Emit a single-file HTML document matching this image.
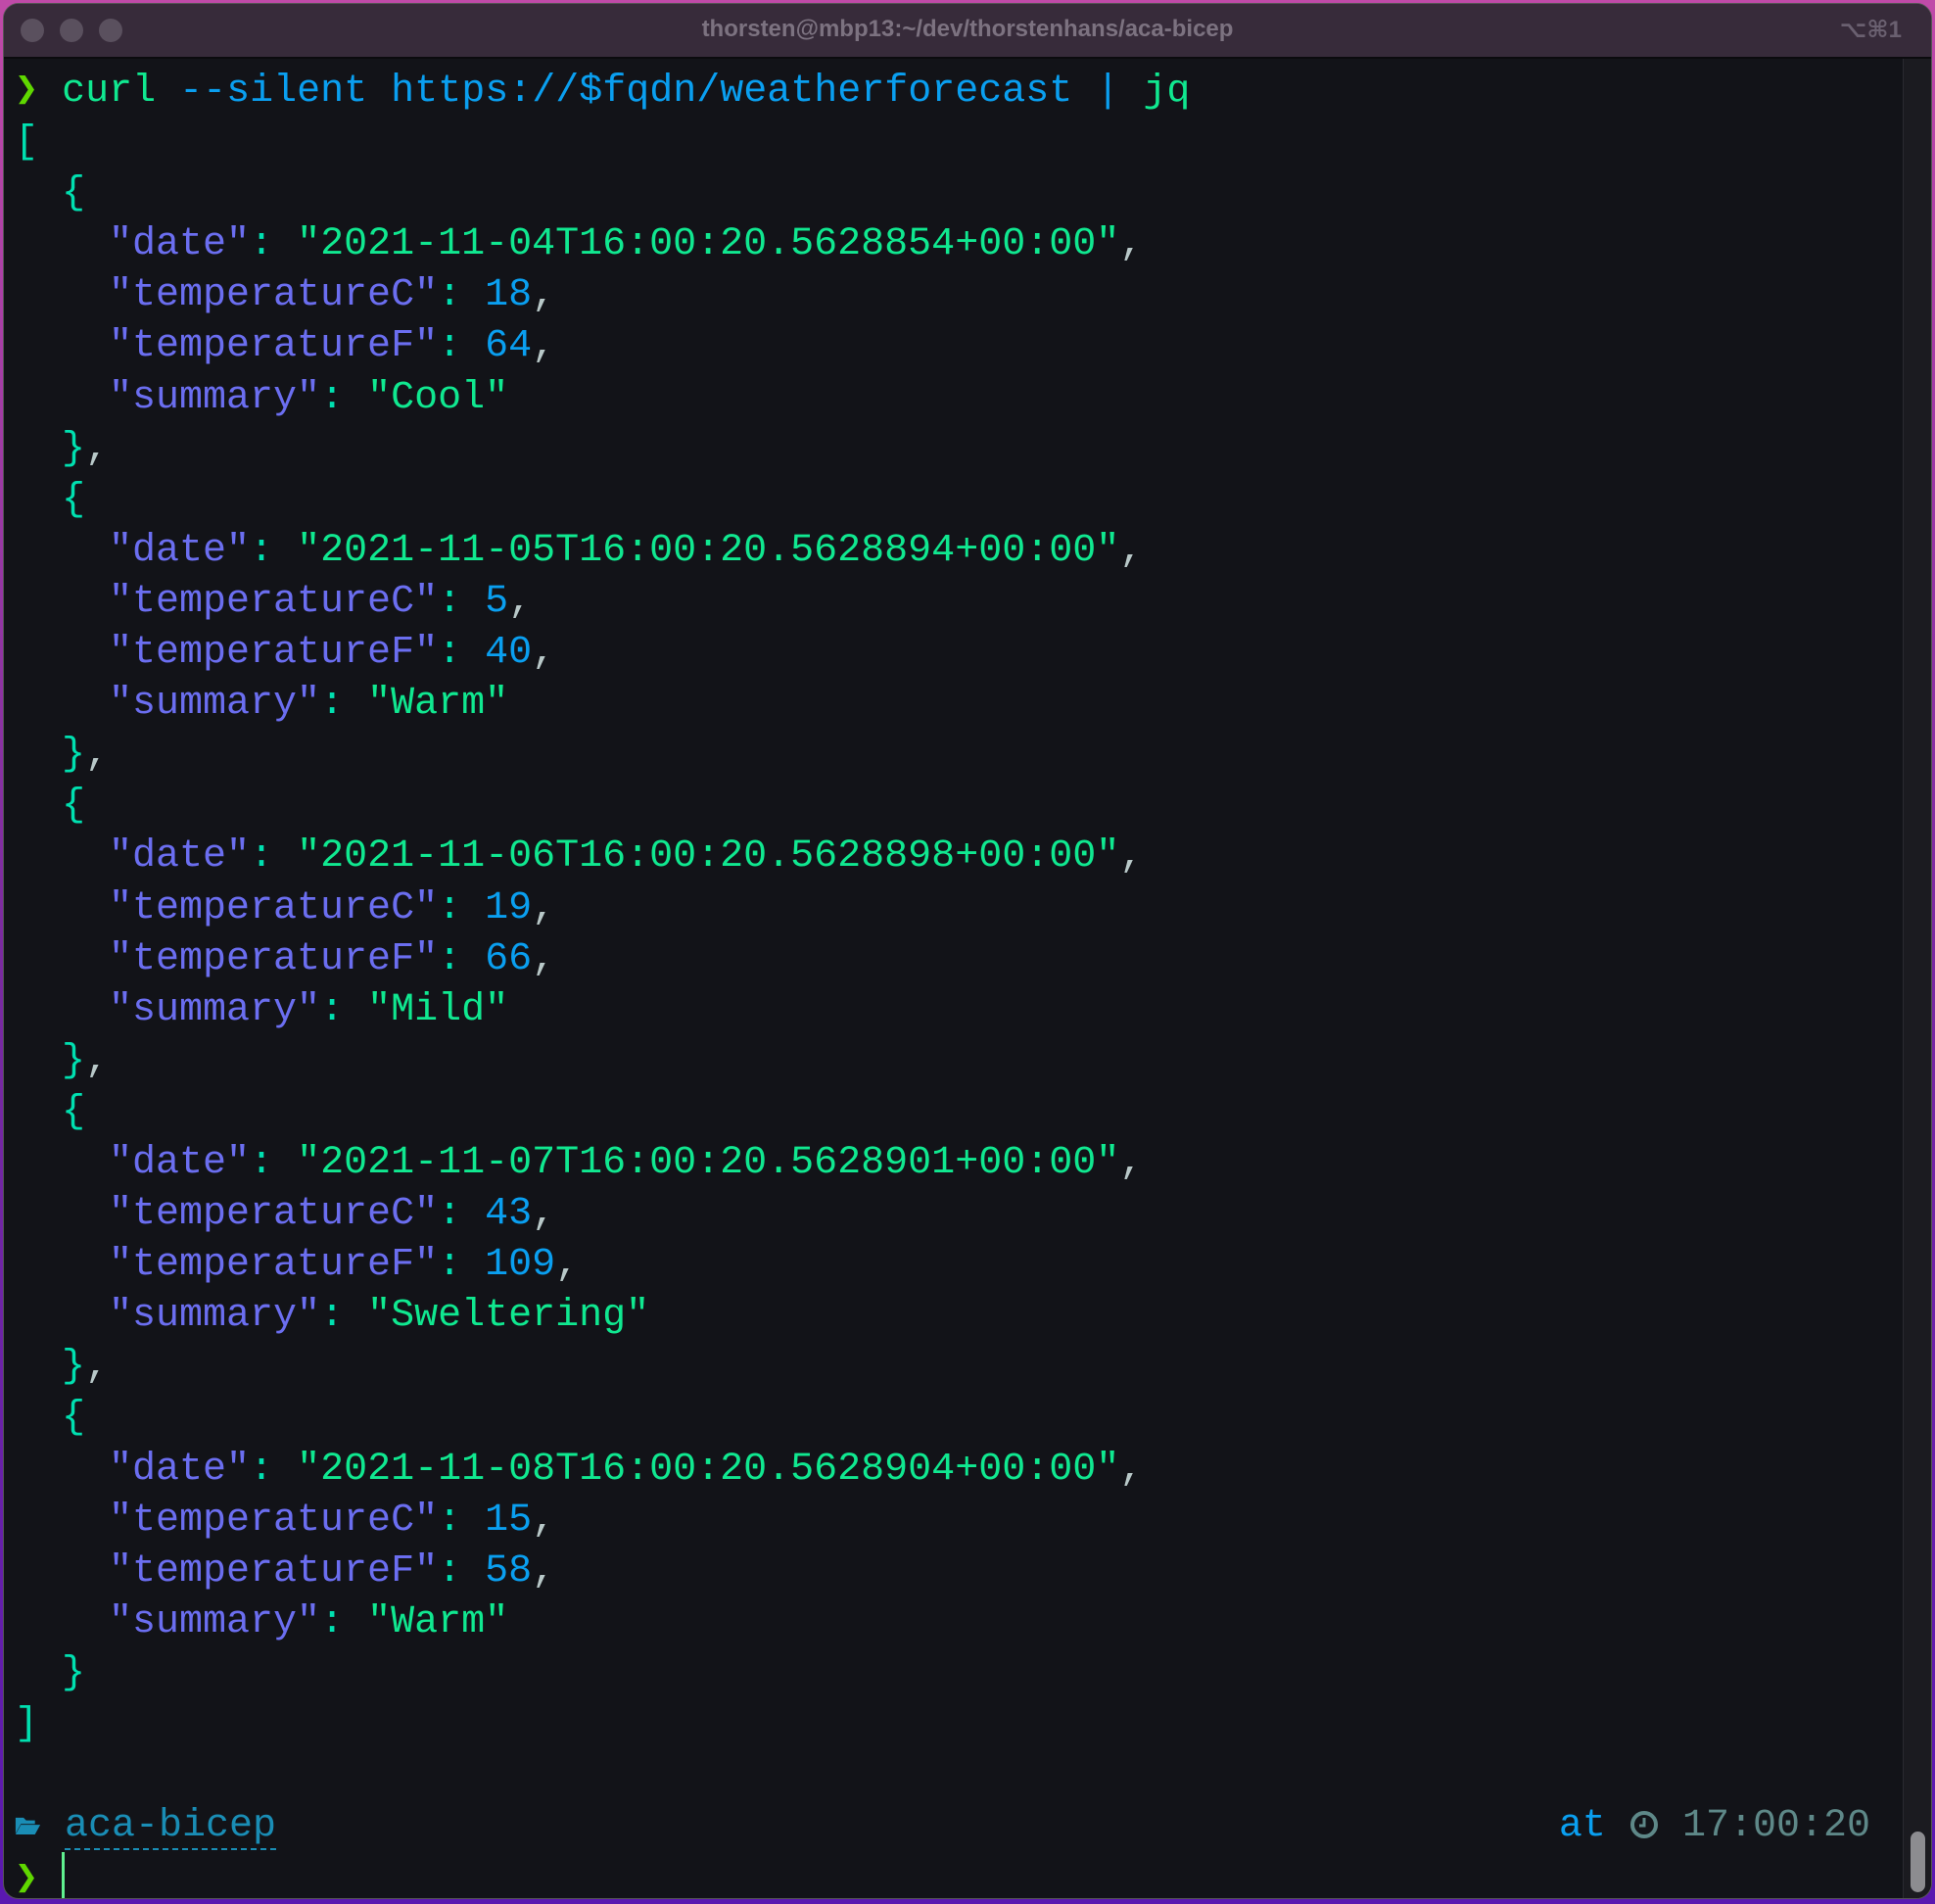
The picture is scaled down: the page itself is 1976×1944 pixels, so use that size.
<!DOCTYPE html>
<html><head><meta charset="utf-8"><style>
html,body{margin:0;padding:0;width:1976px;height:1944px;overflow:hidden;background:linear-gradient(180deg,#c04aa8 0%,#7a2aa0 50%,#5a18b0 100%);}
.win{position:absolute;left:3px;top:3px;width:1970px;height:1936px;border-radius:16px;overflow:hidden;background:#121318;border:1px solid #555;box-sizing:border-box;}
.tb{position:absolute;left:0;top:0;right:0;height:54px;background:#372b3a;border-bottom:2px solid #0b0b0e;}
.dot{position:absolute;top:15px;width:24px;height:24px;border-radius:50%;background:#5a505e;}
.title{position:absolute;left:0;right:0;top:12px;text-align:center;font:bold 24px "Liberation Sans",sans-serif;color:#7c7280;}
.kbd{position:absolute;right:30px;top:12px;font:bold 24px "Liberation Sans","DejaVu Sans",sans-serif;color:#6a6070;}
.sb{position:absolute;right:0;top:56px;width:28px;bottom:0;background:#1b1b20;border-left:1px solid #2a2a30;}
.thumb{position:absolute;right:6px;bottom:6px;width:15px;height:62px;border-radius:8px;background:#8c8c90;}
pre{position:absolute;left:11px;top:64px;margin:0;font:40px/52.1px "Liberation Mono",monospace;color:#00e0a8;white-space:pre;}
.rp{position:absolute;right:62px;top:1835px;margin:0;font:40px/52.1px "Liberation Mono",monospace;white-space:pre;}
.p{color:#5fd700}.c{color:#10e890}.u{color:#0a9ff0}.k{color:#6b6ef0}.s{color:#10e890}.n{color:#0a9ff0}.b{color:#00e0b0}.m{color:#b8c8c8}
.d{color:#1a8db5;border-bottom:2px dashed #1a8db5}
.at{color:#0a9ff0}.t{color:#5e8888}
.cur{display:inline-block;width:3px;height:50px;background:#60f090;vertical-align:-12px;}
</style></head><body>
<div class="win">
<div class="tb"><div class="dot" style="left:17px"></div><div class="dot" style="left:57px"></div><div class="dot" style="left:97px"></div>
<div class="title">thorsten@mbp13:~/dev/thorstenhans/aca-bicep</div><div class="kbd">⌥⌘1</div></div>
<div class="sb"><div class="thumb"></div></div>
<pre><span class="p">❯</span> <span class="c">curl</span> <span class="u">--silent https://$fqdn/weatherforecast | </span><span class="c">jq</span>
<span class="b">[</span>
<span class="b">  {</span>
    <span class="k">"date"</span><span class="b">:</span> <span class="s">"2021-11-04T16:00:20.5628854+00:00"</span><span class="m">,</span>
    <span class="k">"temperatureC"</span><span class="b">:</span> <span class="n">18</span><span class="m">,</span>
    <span class="k">"temperatureF"</span><span class="b">:</span> <span class="n">64</span><span class="m">,</span>
    <span class="k">"summary"</span><span class="b">:</span> <span class="s">"Cool"</span>
<span class="b">  }</span><span class="m">,</span>
<span class="b">  {</span>
    <span class="k">"date"</span><span class="b">:</span> <span class="s">"2021-11-05T16:00:20.5628894+00:00"</span><span class="m">,</span>
    <span class="k">"temperatureC"</span><span class="b">:</span> <span class="n">5</span><span class="m">,</span>
    <span class="k">"temperatureF"</span><span class="b">:</span> <span class="n">40</span><span class="m">,</span>
    <span class="k">"summary"</span><span class="b">:</span> <span class="s">"Warm"</span>
<span class="b">  }</span><span class="m">,</span>
<span class="b">  {</span>
    <span class="k">"date"</span><span class="b">:</span> <span class="s">"2021-11-06T16:00:20.5628898+00:00"</span><span class="m">,</span>
    <span class="k">"temperatureC"</span><span class="b">:</span> <span class="n">19</span><span class="m">,</span>
    <span class="k">"temperatureF"</span><span class="b">:</span> <span class="n">66</span><span class="m">,</span>
    <span class="k">"summary"</span><span class="b">:</span> <span class="s">"Mild"</span>
<span class="b">  }</span><span class="m">,</span>
<span class="b">  {</span>
    <span class="k">"date"</span><span class="b">:</span> <span class="s">"2021-11-07T16:00:20.5628901+00:00"</span><span class="m">,</span>
    <span class="k">"temperatureC"</span><span class="b">:</span> <span class="n">43</span><span class="m">,</span>
    <span class="k">"temperatureF"</span><span class="b">:</span> <span class="n">109</span><span class="m">,</span>
    <span class="k">"summary"</span><span class="b">:</span> <span class="s">"Sweltering"</span>
<span class="b">  }</span><span class="m">,</span>
<span class="b">  {</span>
    <span class="k">"date"</span><span class="b">:</span> <span class="s">"2021-11-08T16:00:20.5628904+00:00"</span><span class="m">,</span>
    <span class="k">"temperatureC"</span><span class="b">:</span> <span class="n">15</span><span class="m">,</span>
    <span class="k">"temperatureF"</span><span class="b">:</span> <span class="n">58</span><span class="m">,</span>
    <span class="k">"summary"</span><span class="b">:</span> <span class="s">"Warm"</span>
<span class="b">  }</span>
<span class="b">]</span>

<svg width="27" height="24" viewBox="0 0 30 24" style="vertical-align:-2px"><path d="M1 3h9l3 3h10v4H7L1 21z" fill="#1a8db5"/><path d="M7 11h22l-6 11H1z" fill="#1a8db5"/></svg> <span class="d">aca-bicep</span>
<span class="p">❯</span> <span class="cur"></span></pre>
<div class="rp"><span class="at">at</span> <svg width="30" height="30" viewBox="0 0 30 30" style="vertical-align:-4px"><circle cx="15" cy="15" r="12" fill="none" stroke="#5e8888" stroke-width="4"/><path d="M15 8v8h-5" fill="none" stroke="#5e8888" stroke-width="3"/></svg> <span class="t">17:00:20</span></div>
</div>
</body></html>
